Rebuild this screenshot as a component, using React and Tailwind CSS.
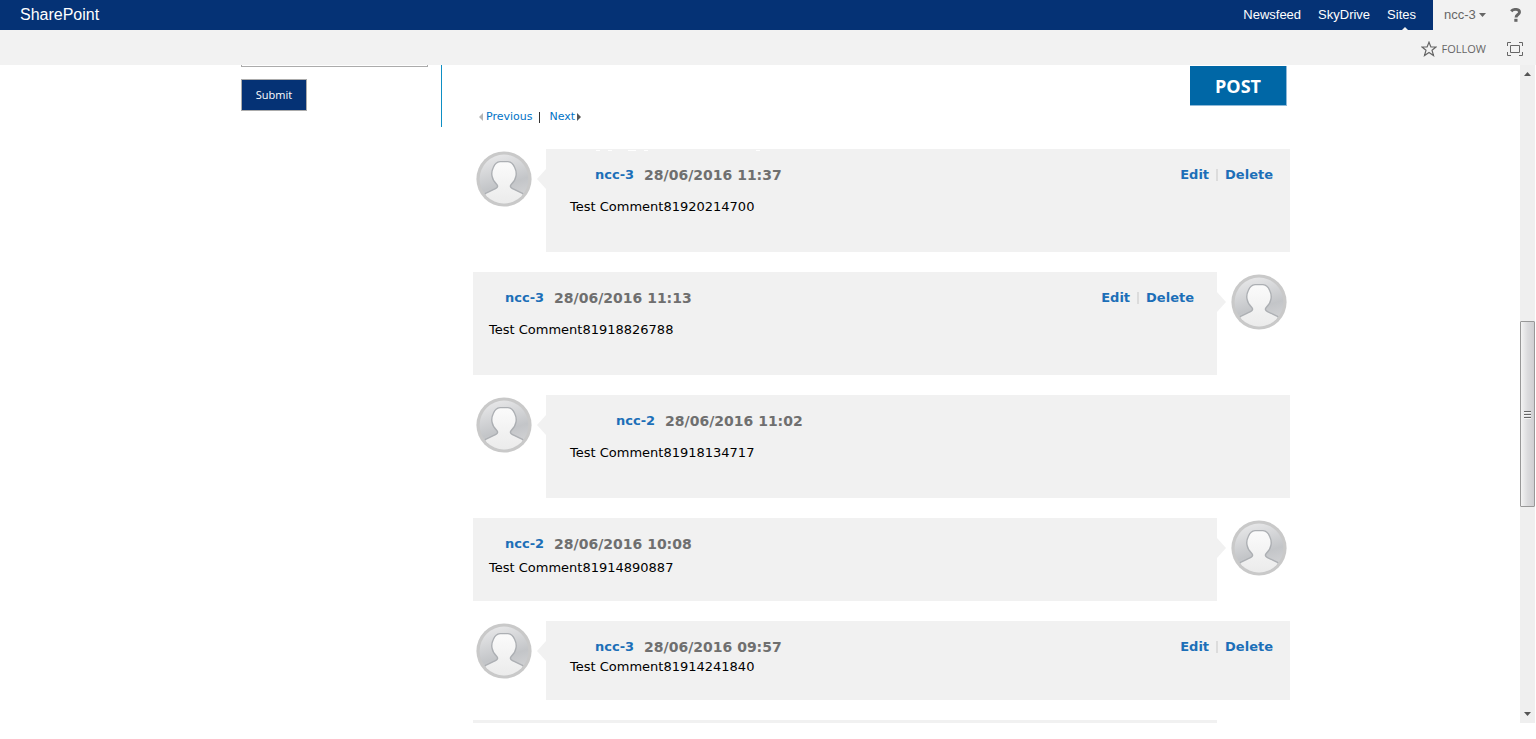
import React from "react";

const comments = [
  { side: "left", author: "ncc-3", date: "28/06/2016 11:37", text: "Test Comment81920214700", own: true, indent: "pl-[25px]", gap: "mt-3", pad: "pb-[35px]", marks: true },
  { side: "right", author: "ncc-3", date: "28/06/2016 11:13", text: "Test Comment81918826788", own: true, indent: "pl-4", gap: "mt-3", pad: "pb-[35px]" },
  { side: "left", author: "ncc-2", date: "28/06/2016 11:02", text: "Test Comment81918134717", own: false, indent: "pl-[46px]", gap: "mt-3", pad: "pb-[35px]" },
  { side: "right", author: "ncc-2", date: "28/06/2016 10:08", text: "Test Comment81914890887", own: false, indent: "pl-4", gap: "mt-1", pad: "pb-[23px]" },
  { side: "left", author: "ncc-3", date: "28/06/2016 09:57", text: "Test Comment81914241840", own: true, indent: "pl-[25px]", gap: "mt-0", pad: "pb-[23px]" },
];

function Avatar() {
  return (
    <svg className="block size-14" viewBox="0 0 56 56" role="img" aria-label="User avatar">
      <defs>
        <linearGradient id="disc" x1="0" y1="0" x2="0.3" y2="1">
          <stop offset="0" stopColor="#ececed" />
          <stop offset="0.7" stopColor="#c3c5c8" />
          <stop offset="1" stopColor="#d0d1d3" />
        </linearGradient>
        <linearGradient id="person" x1="0" y1="0" x2="0" y2="1">
          <stop offset="0" stopColor="#fbfbfb" />
          <stop offset="1" stopColor="#e9e9e9" />
        </linearGradient>
        <clipPath id="inner"><circle cx="28" cy="28" r="24.4" /></clipPath>
      </defs>
      <circle cx="28" cy="28" r="27.6" fill="#c9c9c9" />
      <circle cx="28" cy="28" r="24.4" fill="url(#disc)" />
      <g clipPath="url(#inner)">
        <path
          d="M24 10.600H32C35 11 37.200 13 38.600 16.200C40 19 40.600 22 40 25C39.400 28.500 37.500 31.500 35 33.800C33.800 35.200 34.600 36.600 36.500 37.600C40.500 39.600 44 41 47 42.600L48 58H8L9 42.600C12 41 15.500 39.600 19.500 37.600C21.400 36.600 22.200 35.200 21 33.800C18.500 31.500 16.600 28.500 16 25C15.400 22 16 19 17.400 16.200C18.800 13 21 11 24 10.600Z"
          fill="url(#person)"
          stroke="#acafb3"
          strokeWidth="1.400"
        />
      </g>
    </svg>
  );
}

function Comment({ c }) {
  const left = c.side === "left";
  return (
    <li className={left ? "flex" : "flex flex-row-reverse"}>
      <div className={left ? "w-[73px] shrink-0 pt-[2px] pl-[3px]" : "w-[73px] shrink-0 pt-[2px] pl-[14px]"}>
        <Avatar />
      </div>
      <article className={`relative min-w-0 flex-1 bg-[#f1f1f1] pt-4 ${c.pad} ${left ? "pr-[17px] pl-6" : "pr-[23px] pl-4"}`}>
        <svg
          className={left ? "absolute top-5 -left-[9px]" : "absolute top-5 -right-[9px] rotate-180"}
          width="9"
          height="20"
          viewBox="0 0 9 20"
          aria-hidden="true"
        >
          <path d="M9 0V20L0 10Z" fill="#f1f1f1" />
        </svg>
        {c.marks && (
          <svg className="absolute top-0 left-[50px]" width="170" height="2" viewBox="0 0 170 2" aria-hidden="true">
            <path d="M0 1.500H4M12 1.500H16M32 1.500H40M48 1.500H52M160 1.500H164" stroke="#fff" />
          </svg>
        )}
        <header className={`flex h-5 items-center justify-between text-[13px] leading-5 font-bold ${c.indent}`}>
          <div className="flex items-center gap-[10px]">
            <a href="#author" className="text-[#1c6fb8]">{c.author}</a>
            <time className="text-sm leading-5 text-[#6f6f6f]">{c.date}</time>
          </div>
          {c.own && (
            <div className="flex items-center gap-[7px]">
              <a href="#edit" className="text-[#1c6fb8]">Edit</a>
              <span className="h-3 w-[2px] bg-[#dcdcdc]" />
              <a href="#delete" className="text-[#1c6fb8]">Delete</a>
            </div>
          )}
        </header>
        <p className={`text-[13px] leading-5 text-black ${c.gap}`}>{c.text}</p>
      </article>
    </li>
  );
}

function Scrollbar() {
  return (
    <div className="mr-px flex w-[15px] shrink-0 flex-col items-center bg-[#efefef]" aria-hidden="true">
      <svg className="mt-[5px] shrink-0" width="7" height="8" viewBox="0 0 7 8"><path d="M0 6L3.500 2L7 6Z" fill="#555" /></svg>
      <div className="w-full flex-[243_0_0]" />
      <div className="flex h-[186px] w-full shrink-0 items-center justify-center rounded-[1px] border border-[#989898] bg-linear-to-r from-[#f3f3f3] via-[#dcdcde] to-[#cfcfd2]">
        <svg width="7" height="9" viewBox="0 0 7 9"><path d="M0 1.500H7M0 4.500H7M0 7.500H7" stroke="#666" /><path d="M0 2.500H7M0 5.500H7M0 8.500H7" stroke="#f4f4f4" /></svg>
      </div>
      <div className="w-full flex-[203_0_0]" />
      <svg className="mb-[5px] shrink-0" width="7" height="8" viewBox="0 0 7 8"><path d="M0 2L3.500 6L7 2Z" fill="#555" /></svg>
    </div>
  );
}

export default function App() {
  return (
    <div className="flex h-screen flex-col overflow-hidden bg-white pb-4 font-['DejaVu_Sans',sans-serif]">
      <header className="flex h-[30px] shrink-0 bg-[#053275] font-['Liberation_Sans',sans-serif] text-white">
        <a href="#home" className="pl-5 text-base leading-[29px]">SharePoint</a>
        <nav className="ml-auto flex gap-[17px] pr-[17px] text-[13px] leading-[29px]">
          <a href="#newsfeed">Newsfeed</a>
          <a href="#skydrive">SkyDrive</a>
          <a href="#sites" className="relative">
            Sites
            <svg className="absolute bottom-0 left-1/2" width="6" height="3" viewBox="0 0 6 3" aria-hidden="true"><path d="M0 3L3 0L6 3Z" fill="#f2f2f2" /></svg>
          </a>
        </nav>
        <div className="flex w-[103px] items-center bg-[#f2f2f2] pl-[11px] text-[#666]">
          <button type="button" className="flex items-center gap-[3px] text-[13px]">
            ncc-3
            <svg width="7" height="4" viewBox="0 0 7 4" aria-hidden="true"><path d="M0 0H7L3.500 4Z" fill="#666" /></svg>
          </button>
          <button type="button" aria-label="Help" className="mr-[14px] ml-auto">
            <svg width="12" height="14" viewBox="0 0 12 14" aria-hidden="true">
              <path d="M1.200 3.200C2.300 1.900 3.800 1.400 5.600 1.400C8 1.400 9.500 2.500 9.500 4.200C9.500 6.600 6 6.500 6 9.600" fill="none" stroke="#666" strokeWidth="2.900" />
              <rect x="4.300" y="10.800" width="3.200" height="3" fill="#666" />
            </svg>
          </button>
        </div>
      </header>
      <div className="flex h-[35px] shrink-0 items-center justify-end gap-[21px] bg-[#f2f2f2] pt-[3px] pr-[13px] text-[#666]">
        <button type="button" className="flex items-center gap-[5px] font-['Open_Sans',sans-serif] text-[11px]">
          <svg width="16" height="16" viewBox="0 0 16 16" fill="none" stroke="#666" strokeWidth="1.200" aria-hidden="true">
            <path d="M8 1.200L9.900 6H15L11 9.200L12.500 14.500L8 11.400L3.500 14.500L5 9.200L1 6H6.100Z" />
          </svg>
          FOLLOW
        </button>
        <button type="button" aria-label="Focus on content">
          <svg className="block" width="16" height="14" viewBox="0 0 16 14" fill="none" stroke="#666" aria-hidden="true">
            <path d="M3.500 3.500H12.500V10.500H3.500ZM0.500 4V0.500H4M12 0.500H15.500V4M15.500 10V13.500H12M4 13.500H0.500V10" />
          </svg>
        </button>
      </div>
      <div className="flex min-h-0 flex-1">
        <div className="min-w-0 flex-1 overflow-hidden">
          <div className="mx-auto flex w-full max-w-[1060px] items-start pl-[11px]">
            <aside className="h-[62px] w-[201px] shrink-0 border-r border-[#0e8fc4] pr-[13px]">
              <div className="h-[2px] border border-t-0 border-[#ababab]" />
              <button type="button" className="mt-3 h-8 w-[66px] border border-[#ababab] bg-[#053275] font-['Open_Sans',sans-serif] text-[11px] text-white">
                Submit
              </button>
            </aside>
            <main className="ml-[31px] min-w-0 flex-1">
              <div className="flex justify-end pt-px pr-[3px]">
                <button type="button" className="h-10 w-[97px] border-r border-b border-[#8fb9d8] bg-[#0067a6] font-['Open_Sans',sans-serif] text-lg font-bold text-white">
                  POST
                </button>
              </div>
              <nav className="mt-px flex items-center pl-[6px] text-[11px] leading-5 text-[#0072c6]">
                <svg className="mr-[3px]" width="4" height="8" viewBox="0 0 4 8" aria-hidden="true"><path d="M4 0V8L0 4Z" fill="#b5b5b5" /></svg>
                <a href="#previous">Previous</a>
                <span className="mr-[10px] ml-[6px] h-[11px] w-px bg-[#333]" />
                <a href="#next">Next</a>
                <svg className="ml-[2px]" width="4" height="8" viewBox="0 0 4 8" aria-hidden="true"><path d="M0 0V8L4 4Z" fill="#555" /></svg>
              </nav>
              <ul className="mt-[22px] flex flex-col gap-5">
                {comments.map((c) => <Comment key={c.date} c={c} />)}
                <li className="mr-[73px] h-24 bg-[#f1f1f1]" />
              </ul>
            </main>
          </div>
        </div>
        <Scrollbar />
      </div>
    </div>
  );
}
